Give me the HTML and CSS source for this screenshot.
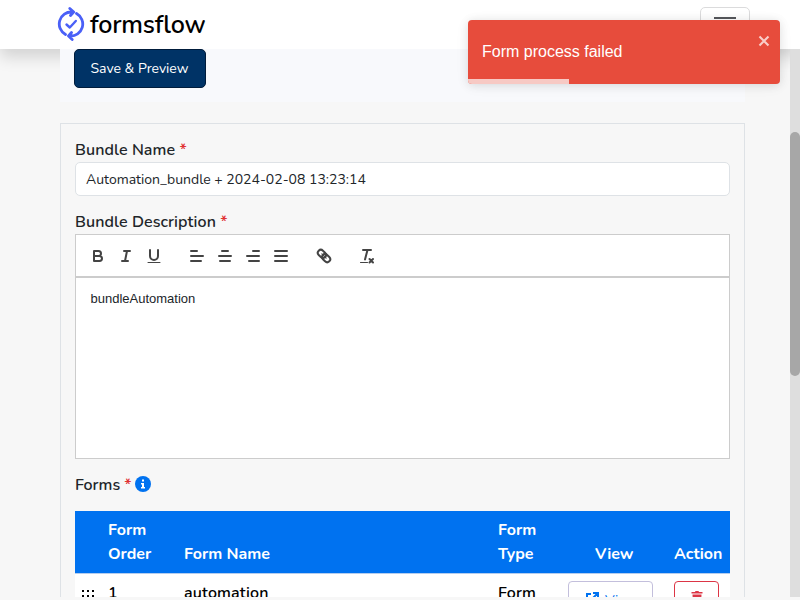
FILE: index.html
```html
<!DOCTYPE html>
<html lang="en">
<head>
<meta charset="utf-8">
<title>formsflow</title>
<link rel="stylesheet" href="styles.css">
</head>
<body>
<div class="app">
  <header class="navbar">
    <div class="brand">
      <svg class="brand-mark" width="28" height="34" viewBox="0 0 28 34" fill="none" stroke="#4a60f7" stroke-width="2.8" stroke-linecap="round" stroke-linejoin="round">
        <path d="M8.500 27.500A12 12 0 0 1 15 5M12.800 1.500L16.700 5L13.500 8.500M19.500 6.500A12 12 0 0 1 13 29M15.200 32.500L11.500 29L14.500 25.500"/>
        <path d="M9.500 17.500L12.800 20.500L18.800 14" stroke-width="2.400"/>
      </svg>
      <span class="brand-name">formsflow</span>
    </div>
    <button class="menu-toggle" aria-label="Menu"><span></span></button>
  </header>
  <div class="page">
    <main class="content">
      <div class="actions"><button class="save">Save &amp; Preview</button></div>
      <section class="card">
        <div class="label"><span>Bundle Name</span> <b>*</b></div>
        <div class="input"><span>Automation_bundle + 2024-02-08 13:23:14</span></div>
        <div class="label description"><span>Bundle Description</span> <b>*</b></div>
        <div class="editor">
          <div class="toolbar">
            <svg viewBox="0 0 18 18"><path d="M5 4h4.500a2.500 2.500 0 0 1 0 5H5zM5 9h5.500a2.500 2.500 0 0 1 0 5H5z"/></svg>
            <svg viewBox="0 0 18 18"><path d="M7 4h6M5 14h6M8 14L10 4"/></svg>
            <svg viewBox="0 0 18 18"><path d="M5 3v6a4 4 0 0 0 8 0V3"/><path d="M3 15.500h12" stroke-width="1"/></svg>
            <svg class="group" viewBox="0 0 18 18"><path d="M3 4h6M3 9h12M3 14h10"/></svg>
            <svg viewBox="0 0 18 18"><path d="M6 4h6M3 9h12M4 14h10"/></svg>
            <svg viewBox="0 0 18 18"><path d="M9 4h6M3 9h12M5 14h10"/></svg>
            <svg viewBox="0 0 18 18"><path d="M3 4h12M3 9h12M3 14h12"/></svg>
            <svg class="group" viewBox="0 0 18 18"><g transform="rotate(45 9 9)"><rect x="1.500" y="6" width="9" height="6" rx="3"/><rect x="7.500" y="6" width="9" height="6" rx="3"/><path d="M6 9h6" stroke-width="1.200"/></g></svg>
            <svg class="group" viewBox="0 0 18 18"><path d="M5 3h8M7 12.500L9.500 3"/><path d="M2.500 15.500h7" stroke-width="1"/><path d="M11.500 12l3.500 3.500M15 12l-3.500 3.500"/></svg>
          </div>
          <div class="editor-text"><span>bundleAutomation</span></div>
        </div>
        <div class="label forms"><span>Forms</span> <b>*</b>
          <svg class="info" width="16" height="16" viewBox="0 0 16 16"><circle cx="8" cy="8" r="8" fill="#0072f0"/><path d="M7 3.500h2v2H7zM6 7h3v4h1v1.500H6V11h1V8.500H6z" fill="#fff"/></svg>
        </div>
        <div class="table">
          <div class="row head">
            <span></span><span>Form<br>Order</span><span>Form Name</span><span>Form<br>Type</span><span class="h-view">View</span><span>Action</span>
          </div>
          <div class="row body">
            <span class="grip"><i></i><i></i><i></i><i></i><i></i><i></i><i></i><i></i><i></i></span>
            <span>1</span><span>automation</span><span>Form</span>
            <span><button class="view"><svg width="13" height="14" viewBox="0 0 13 14" fill="none" stroke="#0072f0" stroke-width="2"><path d="M5 2H1v11h10V9M7 1h5v5M12 1L5 8"/></svg>View</button></span>
            <span><button class="delete" aria-label="Delete"><svg width="12" height="14" viewBox="0 0 12 14" fill="#dc3545"><path d="M.5 1H4l.5-1h3L8 1h3.500v1.500H.5zM1.500 3.500h9L10 14H2z"/></svg></button></span>
          </div>
        </div>
      </section>
    </main>
    <div class="scrollbar"><div class="thumb"></div></div>
  </div>
  <div class="toast" role="alert">
    <span>Form process failed</span>
    <svg class="close" width="12" height="12" viewBox="0 0 12 12"><path d="M1.500 1.500l9 9M10.500 1.500l-9 9" stroke="#f9cdc8" stroke-width="2.1"/></svg>
    <div class="progress"></div>
  </div>
</div>
</body>
</html>
```

FILE: styles.css
```css
* { box-sizing: border-box; }
body { margin: 0; background: #f7f7f7; font: 16px/24px Nunito, Lato, sans-serif; color: #212529; }
button { font: inherit; background: #fff; }
.app { position: relative; height: 597px; overflow: hidden; }
.navbar { height: 49px; background: #fff; box-shadow: 0 8px 16px rgba(0,0,0,.15); display: flex; justify-content: space-between; padding: 7px 50px 0 57px; }
.brand { display: flex; gap: 5px; height: 34px; }
.brand-name { font-size: 25px; line-height: 36px; font-weight: 650; color: #000; letter-spacing: -.15px; }
.menu-toggle { width: 50px; height: 40px; border: 1px solid #dbdbdc; border-radius: 5px; padding: 9px 13px; display: flex; align-items: flex-start; }
.menu-toggle span { display: block; width: 22px; height: 2px; background: #56585c; }
.page { display: flex; justify-content: space-between; height: 548px; padding-left: 60px; }
.content { position: relative; width: 685px; }
.actions { height: 53px; background: #f8f9fc; padding-left: 14px; }
.save { display: block; width: 132px; height: 39px; padding: 0 1px 0 0; color: #fff; background: #036; border: 1px solid #001c3b; border-radius: 5px; font-size: 14px; }
.card { margin-top: 21px; border: 1px solid #dee2e6; height: 600px; padding: 14px 14px 0; }
.label { height: 24px; font-weight: 650; white-space: nowrap; letter-spacing: .08px; }
.label b { color: #e03131; font-weight: 600; }
.input { height: 34px; border: 1px solid #dee2e6; border-radius: 5px; background: #fff; padding: 5px 10px; font-size: 14px; font-weight: 400; }
.description { margin-top: 14px; }
.editor { border: 1px solid #ccc; background: #fff; height: 225px; }
.toolbar { height: 43px; border-bottom: 2px solid #ccc; padding: 12px 13px; display: flex; gap: 10px; }
.toolbar svg { width: 18px; height: 18px; fill: none; stroke: #444; stroke-width: 2; stroke-linecap: round; stroke-linejoin: round; }
.toolbar .group { margin-left: 15px; }
.editor-text { padding: 12px 14.5px; font: 13px/18px "Liberation Sans", sans-serif; }
.forms { margin-top: 14px; display: flex; gap: 4px; align-items: center; font-weight: 600; letter-spacing: 0; }
.info { margin: -2px 0 0 -.5px; }
.table { margin-top: 14px; background: #fff; color: #000; }
.row { display: grid; grid-template-columns: 33px 76px 314px 70px 106px 56px; }
.head { height: 63px; background: #0072f0; color: #fff; font-weight: 700; align-items: end; padding-bottom: 7px; border-bottom: 1px solid #b4cdee; }
.h-view { padding-left: 27px; }
.body { padding-top: 7px; font-weight: 650; letter-spacing: .15px; }
.grip { display: grid; grid-template-columns: repeat(3, 2px); gap: 3px; width: 12px; margin: 9px 0 0 7px; align-content: start; }
.grip i { height: 2px; background: #000; }
.view { display: flex; gap: 6px; align-items: flex-start; width: 85px; height: 40px; padding: 9px 17px; border: 1px solid #c3bfdc; border-radius: 4px; color: #0072f0; font-size: 14px; font-weight: 400; line-height: 20px; letter-spacing: 0; }
.view svg { margin-top: 1px; flex: none; }
.delete { width: 45px; height: 37px; border: 1px solid #dc3545; border-radius: 4px; }
.scrollbar { width: 10px; background: #dedede; padding-top: 83px; }
.thumb { height: 244px; background: #a7a7a7; border-radius: 5px; }
.toast { position: absolute; left: 468px; top: 20px; width: 312px; height: 64px; border-radius: 4px; background: #e74c3c; color: #fff; font: 16px/24px "Liberation Sans", sans-serif; padding: 20px 14px; overflow: hidden; box-shadow: 0 1px 10px rgba(0,0,0,.1), 0 2px 15px rgba(0,0,0,.05); }
.close { position: absolute; left: 290px; top: 15px; }
.progress { position: absolute; left: 0; bottom: 0; width: 101px; height: 5px; background: #f7c9c4; }
```
